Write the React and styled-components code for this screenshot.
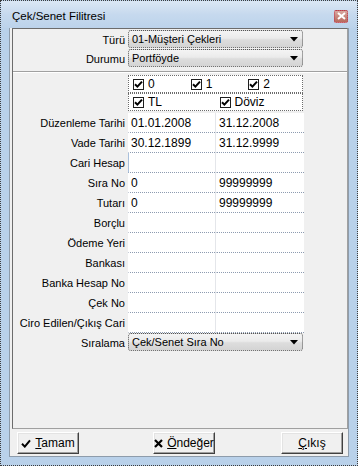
import styled, { createGlobalStyle } from 'styled-components';

const GlobalStyle = createGlobalStyle`
  html, body {
    margin: 0;
    padding: 0;
    background: #ffffff;
  }
  body {
    font-family: "Liberation Sans", Arial, sans-serif;
    font-size: 11px;
    color: #000;
  }
`;

const checks1 = [
  { label: '0', checked: true },
  { label: '1', checked: true },
  { label: '2', checked: true },
];

const checks2 = [
  { label: 'TL', checked: true },
  { label: 'Döviz', checked: true },
];

const edits = [
  { label: 'Düzenleme Tarihi', a: '01.01.2008', b: '31.12.2008' },
  { label: 'Vade Tarihi', a: '30.12.1899', b: '31.12.9999' },
  { label: 'Cari Hesap', a: '', b: '', focus: true },
  { label: 'Sıra No', a: '0', b: '99999999' },
  { label: 'Tutarı', a: '0', b: '99999999' },
  { label: 'Borçlu', a: '', b: '' },
  { label: 'Ödeme Yeri', a: '', b: '' },
  { label: 'Bankası', a: '', b: '' },
  { label: 'Banka Hesap No', a: '', b: '' },
  { label: 'Çek No', a: '', b: '' },
  { label: 'Ciro Edilen/Çıkış Cari', a: '', b: '' },
];

const Arrow = () => (
  <svg width="8" height="5" viewBox="0 0 8 5">
    <polygon points="0,0 8,0 4,4.5" fill="#000" />
  </svg>
);

const Tick = () => (
  <svg width="9" height="9" viewBox="0 0 9 9">
    <path d="M1 4.2 L3.4 6.6 L8 1.6" stroke="#000" strokeWidth="2" fill="none" />
  </svg>
);

const Combo = ({ value }) => (
  <ComboBox>
    <span>{value}</span>
    <Arrow />
  </ComboBox>
);

const Check = ({ label, checked }) => (
  <CheckItem>
    <Box>{checked && <Tick />}</Box>
    <span>{label}</span>
  </CheckItem>
);

const App = () => {
  return (
    <>
      <GlobalStyle />
      <Window>
        <TitleBar>
          <Title>Çek/Senet Filitresi</Title>
          <CloseBtn>
            <svg width="9" height="8" viewBox="0 0 9 8">
              <path d="M1 1 L8 7 M8 1 L1 7" stroke="#fff" strokeWidth="2" />
            </svg>
          </CloseBtn>
        </TitleBar>
        <Body>
          <Client>
            <Panel>
              <Row $h={19}>
                <Label>Türü</Label>
                <Combo value="01-Müşteri Çekleri" />
              </Row>
              <Row $h={19}>
                <Label>Durumu</Label>
                <Combo value="Portföyde" />
              </Row>
              <Separator />
              <Row $h={18}>
                <Label />
                <CheckRow $cols={3}>
                  {checks1.map((c) => (
                    <Check key={c.label} {...c} />
                  ))}
                </CheckRow>
              </Row>
              <Row $h={18}>
                <Label />
                <CheckRow $cols={2}>
                  {checks2.map((c) => (
                    <Check key={c.label} {...c} />
                  ))}
                </CheckRow>
              </Row>
              <EditList>
                {edits.map((e) => (
                  <Row key={e.label} $h={20}>
                    <Label>{e.label}</Label>
                    <EditPair>
                      <Edit $focus={e.focus}>{e.a}</Edit>
                      <Edit>{e.b}</Edit>
                    </EditPair>
                  </Row>
                ))}
              </EditList>
              <Row $h={19}>
                <Label>Sıralama</Label>
                <Combo value="Çek/Senet Sıra No" />
              </Row>
            </Panel>
            <ButtonBar>
              <Button $ml={7}>
                <svg width="10" height="9" viewBox="0 0 10 9">
                  <path d="M1 4.8 L3.8 7.6 L9 1.4" stroke="#000" strokeWidth="2" fill="none" />
                </svg>
                <span>
                  <u>T</u>amam
                </span>
              </Button>
              <Button $ml={74}>
                <svg width="9" height="9" viewBox="0 0 9 9">
                  <path d="M1 1 L8 8 M8 1 L1 8" stroke="#000" strokeWidth="2.2" />
                </svg>
                <span>
                  <u>Ö</u>ndeğer
                </span>
              </Button>
              <Button $ml={66}>
                <span>
                  <u>Ç</u>ıkış
                </span>
              </Button>
            </ButtonBar>
          </Client>
        </Body>
      </Window>
    </>
  );
};

export default App;

const Window = styled.div`
  width: 358px;
  height: 466px;
  box-sizing: border-box;
  border: 1px dotted #3c3c3c;
  background: #b9d1ea;
  display: flex;
  flex-direction: column;
`;

const TitleBar = styled.div`
  height: 27px;
  flex: none;
  box-sizing: border-box;
  padding: 3px 9px 0 9px;
  display: flex;
  align-items: center;
  justify-content: space-between;
  background: linear-gradient(180deg, #dbe7f4 0%, #c6d9ee 50%, #bcd3eb 100%);
`;

const Title = styled.div`
  font-size: 11.5px;
  color: #000;
  padding-left: 2px;
`;

const CloseBtn = styled.div`
  width: 14px;
  height: 13px;
  box-sizing: border-box;
  border: 1px dotted #c0304a;
  border-radius: 2px;
  background: linear-gradient(180deg, #d8a8a0 0%, #b8685c 100%);
  display: flex;
  align-items: center;
  justify-content: center;
`;

const Body = styled.div`
  flex: 1;
  padding: 0 8px 8px 8px;
  display: flex;
`;

const Client = styled.div`
  flex: 1;
  box-sizing: border-box;
  background: #f0f0f0;
  border: 1px solid #8e9cab;
  border-top: none;
  display: flex;
  flex-direction: column;
`;

const Panel = styled.div`
  height: 401px;
  flex: none;
  box-sizing: border-box;
  margin-left: 2px;
  border: 1px solid #6c6c6c;
  border-right-color: #a0a0a0;
  border-bottom-color: #a0a0a0;
  padding-top: 1px;
  display: flex;
  flex-direction: column;
`;

const Row = styled.div`
  height: ${(p) => p.$h}px;
  display: flex;
  align-items: stretch;
`;

const Label = styled.div`
  width: 115px;
  flex: none;
  box-sizing: border-box;
  padding-right: 3px;
  text-align: right;
  display: flex;
  align-items: center;
  justify-content: flex-end;
  white-space: nowrap;
`;

const ComboBox = styled.div`
  width: 175px;
  height: 18px;
  box-sizing: border-box;
  border: 1px dotted #555;
  border-radius: 3px;
  background: linear-gradient(180deg, #f4f4f4 0%, #ebebeb 45%, #dddddd 55%, #d4d4d4 100%);
  display: flex;
  align-items: center;
  justify-content: space-between;
  padding: 0 4px 0 3px;
`;

const Separator = styled.div`
  height: 1px;
  margin: 3px 0 2px 0;
  background: #a0a0a0;
  border-bottom: 1px solid #ffffff;
`;

const CheckRow = styled.div`
  width: 175px;
  box-sizing: border-box;
  border: 1px dotted #6c6c6c;
  background: #fff;
  display: grid;
  grid-template-columns: repeat(${(p) => p.$cols}, 1fr);
  align-items: center;
`;

const CheckItem = styled.div`
  display: flex;
  align-items: center;
  gap: 4px;
  padding-left: 4px;
  font-size: 12px;
`;

const Box = styled.div`
  width: 11px;
  height: 11px;
  box-sizing: border-box;
  border: 1px solid #1e1e1e;
  background: #fff;
  display: flex;
  align-items: center;
  justify-content: center;
`;

const EditList = styled.div`
  margin-top: 2px;
  display: flex;
  flex-direction: column;
`;

const EditPair = styled.div`
  width: 175px;
  display: grid;
  grid-template-columns: 87px 88px;
  background: #e4e6ea;
  column-gap: 1px;
`;

const Edit = styled.div`
  background: #fff;
  box-sizing: border-box;
  border-bottom: 1px dotted #8d9bb0;
  border-left: 1px solid ${(p) => (p.$focus ? '#a9c0dc' : '#fff')};
  padding-left: 2px;
  display: flex;
  align-items: center;
  font-size: 12px;
  white-space: nowrap;
`;

const ButtonBar = styled.div`
  flex: 1;
  display: flex;
  align-items: flex-start;
  padding-top: 3px;
`;

const Button = styled.div`
  width: 62px;
  height: 22px;
  box-sizing: border-box;
  margin-left: ${(p) => p.$ml}px;
  background: #f0f0f0;
  border: 1px solid;
  border-color: #ffffff #404040 #404040 #ffffff;
  box-shadow: inset -1px -1px 0 #a0a0a0, inset 1px 1px 0 #e3e3e3;
  display: flex;
  align-items: center;
  justify-content: center;
  gap: 4px;
  font-size: 12px;

  u {
    text-decoration: underline;
  }
`;
